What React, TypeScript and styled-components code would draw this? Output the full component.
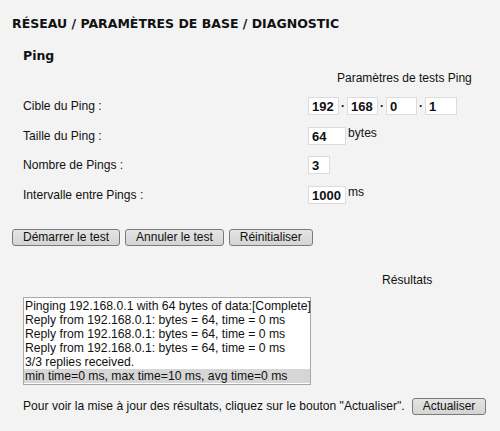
import React from "react";
import styled, { createGlobalStyle } from "styled-components";

const Global = createGlobalStyle`
  html, body { margin: 0; padding: 0; background: #f3f3f3; }
  body { font-family: "Liberation Sans", Arial, sans-serif; color: #111; }
`;

const Page = styled.div`
  width: 500px;
  height: 431px;
  box-sizing: border-box;
  padding: 16px 0 0 12px;
  background: #f3f3f3;
  overflow: hidden;
`;

const Title = styled.h1`
  margin: 0;
  font-family: "DejaVu Sans", Verdana, sans-serif;
  font-weight: bold;
  font-size: 12.5px;
  line-height: 15px;
  color: #111;
`;

const Section = styled.div`
  padding-left: 11px;
`;

const SubTitle = styled.h2`
  margin: 17px 0 0 0;
  font-family: "DejaVu Sans", Verdana, sans-serif;
  font-size: 12.5px;
  line-height: 15px;
  font-weight: bold;
`;

const TableHead = styled.div`
  margin: 8px 0 0 314px;
  font-size: 12px;
  line-height: 15px;
`;

const Form = styled.div`
  margin-top: 11px;
  display: grid;
  grid-template-columns: 285px auto;
  row-gap: 11.5px;
  align-items: center;
`;

const Label = styled.div`
  font-size: 12.1px;
  line-height: 17px;
  padding-top: 1px;
`;

const Field = styled.div`
  display: flex;
  align-items: flex-start;
  height: 18px;
`;

const Box = styled.div<{ $w: number }>`
  width: ${(p) => p.$w}px;
  height: 18px;
  box-sizing: border-box;
  background: #fff;
  border: 1px solid #dcdcdc;
  font-weight: bold;
  font-size: 13px;
  line-height: 17px;
  padding-left: 3px;
`;

const Dot = styled.span`
  width: 8px;
  text-align: center;
  font-weight: bold;
  font-size: 12px;
  line-height: 18px;
`;

const Unit = styled.span`
  margin-left: 2px;
  font-size: 12.1px;
  line-height: 12px;
`;

const Buttons = styled.div`
  display: flex;
  gap: 5px;
  margin-top: 25px;
`;

const Button = styled.button`
  height: 17px;
  padding: 0 10px;
  box-sizing: border-box;
  border: 1px solid #7a7a7a;
  border-radius: 3px;
  background: linear-gradient(#e4e4e4, #d4d4d4);
  font-family: "Liberation Sans", Arial, sans-serif;
  font-size: 12px;
  line-height: 15px;
  color: #111;
  white-space: nowrap;
`;

const ResultsHead = styled.div`
  margin: 27px 0 0 370px;
  font-size: 12.1px;
  line-height: 15px;
`;

const Results = styled.div`
  margin: 9px 0 0 11px;
  width: 288px;
  box-sizing: border-box;
  background: #fff;
  border: 1px solid #a8a8a8;
  padding: 1px 0;
`;

const Line = styled.div<{ $sel?: boolean }>`
  padding-left: 1px;
  font-size: 12.2px;
  line-height: 14px;
  white-space: nowrap;
  background: ${(p) => (p.$sel ? "#d6d6d6" : "transparent")};
`;

const Footer = styled.div`
  margin: 13px 0 0 11px;
  display: flex;
  align-items: center;
  gap: 7px;
  font-size: 12.1px;
  white-space: nowrap;
`;

const lines = [
  "Pinging 192.168.0.1 with 64 bytes of data:[Complete]",
  "Reply from 192.168.0.1: bytes = 64, time = 0 ms",
  "Reply from 192.168.0.1: bytes = 64, time = 0 ms",
  "Reply from 192.168.0.1: bytes = 64, time = 0 ms",
  "3/3 replies received.",
  "min time=0 ms, max time=10 ms, avg time=0 ms",
];

export default function App() {
  return (
    <Page>
      <Global />
      <Title>RÉSEAU / PARAMÈTRES DE BASE / DIAGNOSTIC</Title>
      <Section>
        <SubTitle>Ping</SubTitle>
        <TableHead>Paramètres de tests Ping</TableHead>
        <Form>
          <Label>Cible du Ping :</Label>
          <Field>
            <Box $w={31}>192</Box>
            <Dot>·</Dot>
            <Box $w={31}>168</Box>
            <Dot>·</Dot>
            <Box $w={31}>0</Box>
            <Dot>·</Dot>
            <Box $w={32}>1</Box>
          </Field>
          <Label>Taille du Ping :</Label>
          <Field>
            <Box $w={38}>64</Box>
            <Unit>bytes</Unit>
          </Field>
          <Label>Nombre de Pings :</Label>
          <Field>
            <Box $w={22}>3</Box>
          </Field>
          <Label>Intervalle entre Pings :</Label>
          <Field>
            <Box $w={38}>1000</Box>
            <Unit>ms</Unit>
          </Field>
        </Form>
      </Section>
      <Buttons>
        <Button>Démarrer le test</Button>
        <Button>Annuler le test</Button>
        <Button>Réinitialiser</Button>
      </Buttons>
      <ResultsHead>Résultats</ResultsHead>
      <Results>
        {lines.map((l, i) => (
          <Line key={i} $sel={i === lines.length - 1}>
            {l}
          </Line>
        ))}
      </Results>
      <Footer>
        <span>Pour voir la mise à jour des résultats, cliquez sur le bouton "Actualiser".</span>
        <Button>Actualiser</Button>
      </Footer>
    </Page>
  );
}
